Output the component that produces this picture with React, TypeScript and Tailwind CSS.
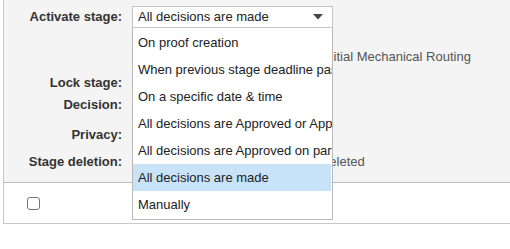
import React from "react";

const options = [
  "On proof creation",
  "When previous stage deadline passes",
  "On a specific date & time",
  "All decisions are Approved or Approved with changes",
  "All decisions are Approved on particular decision",
  "All decisions are made",
  "Manually",
];

function Row({
  label,
  className,
  children,
}: {
  label?: string;
  className?: string;
  children?: React.ReactNode;
}) {
  return (
    <div className={`flex h-[22px] items-center ${className ?? ""}`}>
      <div className="w-[118px] shrink-0 text-right font-bold text-[#333]">
        {label}
      </div>
      <div className="ml-[10px] flex-1 whitespace-nowrap text-[#555]">
        {children}
      </div>
    </div>
  );
}

export default function App() {
  const selected = "All decisions are made";

  return (
    <div className="min-h-screen bg-white font-['Liberation_Sans',Arial,sans-serif] text-[13px]">
      <div className="relative ml-[3px] overflow-hidden border-b border-l border-[#c9c9c9]">
        <div className="flex h-[183px] flex-col border-b border-[#bdbdbd] bg-[#f4f4f4] pt-[6px]">
          <Row label="Activate stage:">
            <div className="flex h-[22px] w-[201px] items-center justify-between border border-[#c4c4c4] bg-white pl-[5px] pr-[9px] text-[#222]">
              <span>{selected}</span>
              <svg width="10" height="6" viewBox="0 0 10 6">
                <path d="M0 0h10L5 5.5z" fill="#444" />
              </svg>
            </div>
          </Row>
          <Row className="mt-[18px]">
            Proof 1234 Electrical Assembly - Initial Mechanical Routing
          </Row>
          <Row label="Lock stage:" className="mt-[4px]" />
          <Row label="Decision:" />
          <Row label="Privacy:" className="mt-[8px]" />
          <Row label="Stage deletion:" className="mt-[5px]">
            Allowed only when all proofs are deleted
          </Row>
        </div>
        <div className="flex h-[40px] items-center pl-[23px]">
          <span className="h-[13px] w-[13px] rounded-[3px] border border-[#767676] bg-white" />
        </div>

        <ul className="absolute left-[128px] top-[28px] w-[201px] border-x border-b border-[#b9b9b9] bg-white py-[1px] text-[#222]">
          {options.map((o) => (
            <li
              key={o}
              className={`flex h-[27px] items-center overflow-hidden whitespace-nowrap pl-[5px] ${
                o === selected ? "mr-[1px] bg-[#c8e2f8]" : ""
              }`}
            >
              {o}
            </li>
          ))}
        </ul>
      </div>
    </div>
  );
}
